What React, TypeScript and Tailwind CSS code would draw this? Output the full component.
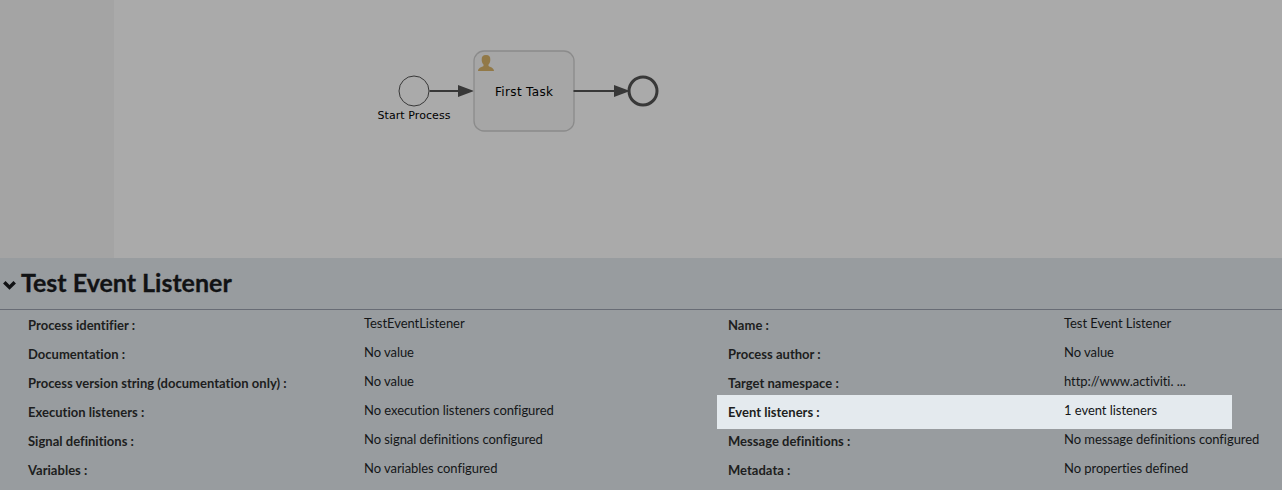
type Property = { label: string; value: string; highlighted?: boolean };

const leftColumn: Property[] = [
  { label: "Process identifier :", value: "TestEventListener" },
  { label: "Documentation :", value: "No value" },
  { label: "Process version string (documentation only) :", value: "No value" },
  { label: "Execution listeners :", value: "No execution listeners configured" },
  { label: "Signal definitions :", value: "No signal definitions configured" },
  { label: "Variables :", value: "No variables configured" },
];

const rightColumn: Property[] = [
  { label: "Name :", value: "Test Event Listener" },
  { label: "Process author :", value: "No value" },
  { label: "Target namespace :", value: "http://www.activiti. ..." },
  { label: "Event listeners :", value: "1 event listeners", highlighted: true },
  { label: "Message definitions :", value: "No message definitions configured" },
  { label: "Metadata :", value: "No properties defined" },
];

function PropertyRow({ label, value, highlighted }: Property) {
  return (
    <div className="relative flex h-[29px] text-[13px] leading-5 whitespace-nowrap [font-variant-ligatures:none]">
      {highlighted && <div className="absolute -top-0.5 -left-[11px] h-[34px] w-[515px] bg-[#e4eaee]" />}
      <div className="relative w-[336px] shrink-0 pt-[5px] font-bold tracking-[0.02px] text-[#1d1e20]">{label}</div>
      <div className="relative pt-[3px] tracking-[-0.05px] text-[#141618]">{value}</div>
    </div>
  );
}

function Diagram() {
  return (
    <svg
      width="1168"
      height="258"
      viewBox="114 0 1168 258"
      className="block font-['DejaVu_Sans',sans-serif]"
      role="img"
      aria-label="Process diagram"
    >
      <circle cx="414" cy="91" r="15" fill="none" stroke="#383838" />
      <path d="M429.5 91H460" stroke="#383838" strokeWidth="2" />
      <path d="M458 85L474 91L458 97ZM614 85L630 91L614 97Z" fill="#383838" />
      <rect x="474" y="51" width="100" height="80" rx="10" fill="#a6a6a6" stroke="#8b8b8b" strokeWidth="1.3" />
      <path d="M573.5 91H616" stroke="#383838" strokeWidth="2" />
      <path
        d="M486 55c-3.200 0-4.500 1.900-4.300 4.900.1 2.100.8 3.500 1.800 4.600v1.500c-1.600 1.100-5.300 1.500-5.500 5h16c-.2-3.500-3.900-3.900-5.500-5v-1.500c1-1.100 1.700-2.500 1.800-4.600.2-3-1.100-4.900-4.300-4.900Z"
        fill="#927947"
      />
      <circle cx="643" cy="91" r="14" fill="none" stroke="#383838" strokeWidth="3" />
      <text x="524" y="96" fontSize="12" textAnchor="middle" textLength="58">First Task</text>
      <text x="414" y="119" fontSize="11" textAnchor="middle" textLength="73">Start Process</text>
    </svg>
  );
}

export default function App() {
  return (
    <div className="flex h-[490px] w-[1282px] flex-col overflow-hidden bg-[#989c9f] font-['Lato',sans-serif]">
      <div className="flex h-[258px] shrink-0 bg-[#aaaaaa]">
        <div className="w-[114px] shrink-0 bg-[#a4a4a4]" />
        <Diagram />
      </div>
      <header className="flex h-[52px] shrink-0 items-start border-b border-[#686c75] pt-[9px] pl-[3px]">
        <svg width="13" height="10" viewBox="0 0 13 10" className="mt-[13px] mr-[5px] shrink-0" fill="none">
          <path d="M1.300 2.200L6.500 7.400L11.700 2.200" stroke="#111214" strokeWidth="3.500" />
        </svg>
        <h1 className="text-[25px] leading-[30px] font-bold text-[#111214] [-webkit-text-stroke:0.3px_#111214]">
          Test Event Listener
        </h1>
      </header>
      <div className="flex pl-7">
        <div className="w-[700px] shrink-0">
          {leftColumn.map((p) => <PropertyRow key={p.label} {...p} />)}
        </div>
        <div>
          {rightColumn.map((p) => <PropertyRow key={p.label} {...p} />)}
        </div>
      </div>
    </div>
  );
}
